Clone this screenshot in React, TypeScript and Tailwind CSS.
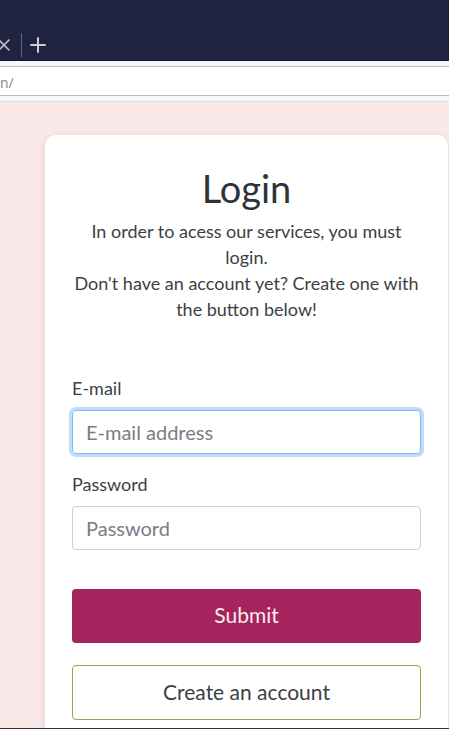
import { Plus, X } from "lucide-react";

function TabStrip() {
  return (
    <header className="flex h-[61px] shrink-0 items-end border-b border-[#17182f] bg-[#20233f] pb-[3px]">
      <div className="flex h-6 items-center text-[#b9bac8]">
        <button type="button" aria-label="Close tab" className="-ml-1 flex w-4 justify-center">
          <X size={20} strokeWidth={2} className="shrink-0" />
        </button>
        <span className="ml-[9px] h-6 w-px bg-[#62647a]" />
        <button type="button" aria-label="New tab" className="ml-1">
          <Plus size={24} strokeWidth={2} className="text-[#cbccd6]" />
        </button>
      </div>
    </header>
  );
}

function AddressBar() {
  return (
    <div className="h-[41px] shrink-0 border-b border-[#dedee1] bg-[#f5f6f8] pt-[5px]">
      <input
        aria-label="Address"
        defaultValue="n/"
        className="block h-[30px] w-full border-y border-[#b8b8bd] bg-white pt-[2px] font-['Open_Sans',sans-serif] text-[14px] text-[#85858a] outline-none"
      />
    </div>
  );
}

type FieldProps = { id: string; label: string; type: string; placeholder: string; active?: boolean };

function Field({ id, label, type, placeholder, active }: FieldProps) {
  return (
    <div className="mb-[17px]">
      <label htmlFor={id} className="mb-[9px] block">
        {label}
      </label>
      <input
        id={id}
        type={type}
        placeholder={placeholder}
        className={`block h-11 w-full rounded-[4px] border px-[13px] text-[20px] outline-none placeholder:text-[#777e85] ${
          active ? "border-[#80b5ee] ring-[3px] ring-[#bfdcfe]" : "border-[#ced1d5]"
        }`}
      />
    </div>
  );
}

export default function App() {
  return (
    <div className="flex h-screen flex-col overflow-hidden border-b border-[#333136] font-['Lato',sans-serif]">
      <TabStrip />
      <AddressBar />
      <main className="min-h-0 flex-1 overflow-hidden bg-[#fbe9e9] pt-[33px] pr-px pl-[45px]">
        <section className="rounded-[11px] bg-white px-[27px] pt-8 pb-10 text-[18px] leading-[26px] text-[#3c3f42] shadow-[0_2px_10px_rgba(90,20,40,0.13)]">
          <h1 className="mb-2 text-center text-[38px] leading-[43px] text-[#303336]">Login</h1>
          <p className="text-center">
            In order to acess our services, you must login.
            <br />
            Don't have an account yet? Create one with the button below!
          </p>
          <form className="mt-[53px]" onSubmit={(event) => event.preventDefault()}>
            <Field id="email" label="E-mail" type="email" placeholder="E-mail address" active />
            <Field id="password" label="Password" type="password" placeholder="Password" />
            <button
              type="submit"
              className="mt-[39px] block h-[54px] w-full rounded-[4px] bg-[#a6245e] pb-[2px] text-[21px] text-[#fbeaf2]"
            >
              Submit
            </button>
            <button
              type="button"
              className="mt-[22px] block h-[55px] w-full rounded-[4px] border border-[#93a944] bg-white pb-[2px] text-[21px]"
            >
              Create an account
            </button>
          </form>
        </section>
      </main>
    </div>
  );
}
